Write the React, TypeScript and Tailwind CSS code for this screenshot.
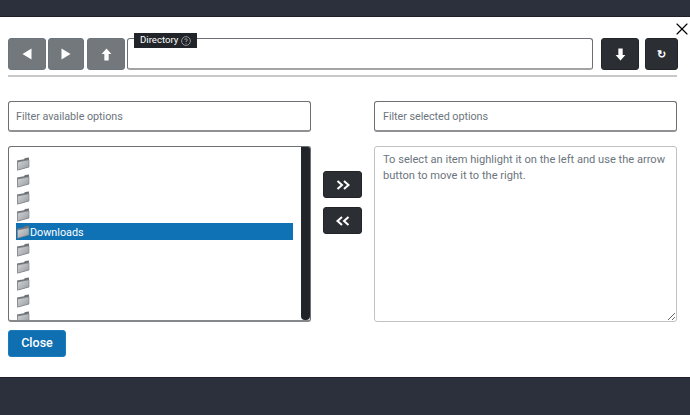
import { X } from 'lucide-react';

const font = { fontFamily: 'Roboto, sans-serif' };

function Folder() {
  return (
    <svg width="14" height="14" viewBox="0 0 14 14" className="shrink-0 translate-y-[1px]">
      <defs>
        <linearGradient id="folderFace" x1="0" y1="0" x2="1" y2="1">
          <stop offset="0" stopColor="#d4d7da" />
          <stop offset="1" stopColor="#94989d" />
        </linearGradient>
      </defs>
      <path d="M1 3.5 L8 2.2 L9 1 L13 0.5 L13 10 L1.5 13.2 Z" fill="#6f7378" />
      <path d="M1.5 5 L13 2.8 L13 10 L1.5 13.2 Z" fill="url(#folderFace)" stroke="#777b80" strokeWidth="0.6" />
    </svg>
  );
}

function IconButton({ dark, className, children }: { dark?: boolean; className: string; children: React.ReactNode }) {
  return (
    <button
      className={`flex h-8 items-center justify-center rounded-[3px] border ${dark ? 'border-[#212529] bg-[#2b2f33]' : 'border-[#6c757d] bg-[#73787d]'} ${className}`}
    >
      {children}
    </button>
  );
}

function Tri({ flip }: { flip?: boolean }) {
  return (
    <svg width="10" height="12" viewBox="0 0 10 12" className={flip ? 'rotate-180' : ''}>
      <path d="M0.5 0.5 L9.5 6 L0.5 11.5 Z" fill="#fff" />
    </svg>
  );
}

function ArrowUp({ down }: { down?: boolean }) {
  return (
    <svg width="11" height="13" viewBox="0 0 10 12" className={down ? 'rotate-180' : ''}>
      <path d="M5 0.5 L9.5 5.5 L7 5.5 L7 11.5 L3 11.5 L3 5.5 L0.5 5.5 Z" fill="#fff" />
    </svg>
  );
}

function Chevrons({ left }: { left?: boolean }) {
  return (
    <svg width="14" height="10" viewBox="0 0 14 10" className={left ? 'rotate-180' : ''} fill="none" stroke="#fff" strokeWidth="2">
      <path d="M1.5 1 L6 5 L1.5 9" />
      <path d="M8 1 L12.5 5 L8 9" />
    </svg>
  );
}

export default function App() {
  const rows = ['', '', '', '', 'Downloads', '', '', '', '', '', ''];

  return (
    <div className="flex h-[415px] w-[690px] flex-col overflow-hidden bg-[#2c303c]" style={font}>
      <div className="h-[17px] shrink-0 border-b border-[#1d2028]" />

      <div className="relative h-[360px] shrink-0 bg-white px-2 pt-[21px]">
        <X className="absolute right-[-2px] top-[2px] h-[20px] w-[20px] text-black" strokeWidth={1.4} />

        {/* directory bar */}
        <div className="flex mr-[4px]">
          <IconButton className="w-[38px]"><Tri flip /></IconButton>
          <IconButton className="ml-[2px] w-9"><Tri /></IconButton>
          <IconButton className="ml-[3px] w-[38px]"><ArrowUp /></IconButton>
          <div className="relative ml-[2px] h-8 w-[466px] rounded-[3px] border border-[#6c7075] border-b-2 border-b-[#a2a4a6]">
            <span className="absolute left-[6px] top-[-6px] flex h-[15px] w-[63px] items-center gap-[3px] bg-[#212529] pl-[6px] text-[9.6px] text-white">
              Directory
              <svg width="10" height="10" viewBox="0 0 10 10" fill="none" stroke="#aeb1b4" strokeWidth="0.8">
                <circle cx="5" cy="5" r="4.4" />
                <path d="M3.7 3.9 A1.3 1.3 0 1 1 5 5.3 V6" />
                <path d="M5 7 V7.7" />
              </svg>
            </span>
          </div>
          <IconButton dark className="ml-2 w-[38px]"><ArrowUp down /></IconButton>
          <IconButton dark className="ml-[6px] w-[33px]">
            <span className="text-[11px] font-bold leading-none text-white">↻</span>
          </IconButton>
        </div>

        <div className="mt-[5px] mr-[5px] h-[2px] bg-[#c6c8c9]" />

        {/* picker */}
        <div className="mt-[24px] mr-[5px] grid grid-cols-[303px_1fr_303px]">
          <div>
            <input
              readOnly
              placeholder="Filter available options"
              className="h-[31px] w-full rounded-[3px] border border-[#6c7075] border-b-2 border-b-[#8f9194] px-[7px] pt-[1px] text-[10.8px] tracking-[-0.05px] text-[#6c757d] outline-none placeholder:text-[#6c757d]"
            />
            <div className="mt-[14px] flex h-[176px] overflow-hidden rounded-[3px] border border-[#6c7075] border-b-2 border-b-[#85888b]">
              <div className="flex-1 overflow-hidden pl-[7px] pr-[8px] pt-[7px]">
                {rows.map((name, i) => (
                  <div
                    key={i}
                    className={`flex h-[17.2px] items-center text-[10.8px] ${name ? 'bg-[#0f72b5] text-white' : ''}`}
                  >
                    <Folder />
                    <span className="pt-[3px]">{name}</span>
                  </div>
                ))}
              </div>
              <div className="w-[9px] rounded-b-[4px] bg-[#212529]" />
            </div>
          </div>

          <div className="flex flex-col items-center gap-[9px] pt-[70px]">
            <IconButton dark className="!h-[27px] w-[39px]"><Chevrons /></IconButton>
            <IconButton dark className="!h-[27px] w-[39px]"><Chevrons left /></IconButton>
          </div>

          <div>
            <input
              readOnly
              placeholder="Filter selected options"
              className="h-[31px] w-full rounded-[3px] border border-[#6c7075] border-b-2 border-b-[#8f9194] px-2 pt-[1px] text-[10.8px] tracking-[-0.05px] text-[#6c757d] outline-none placeholder:text-[#6c757d]"
            />
            <textarea
              readOnly
              placeholder="To select an item highlight it on the left and use the arrow button to move it to the right."
              className="mt-[14px] block h-[176px] w-full rounded-[3px] border border-[#bfc1c3] px-2 py-[5px] text-[11.1px] leading-[15.5px] outline-none placeholder:text-[#6c757d]"
            />
          </div>
        </div>

        <button className="mt-2 h-[27px] w-[58px] rounded-[3px] border border-[#1a7cbd] bg-[#0f6fb1] text-[12.5px] font-medium text-white">
          Close
        </button>
      </div>

      <div className="flex-1 border-t border-[#1d2028]" />
    </div>
  );
}
